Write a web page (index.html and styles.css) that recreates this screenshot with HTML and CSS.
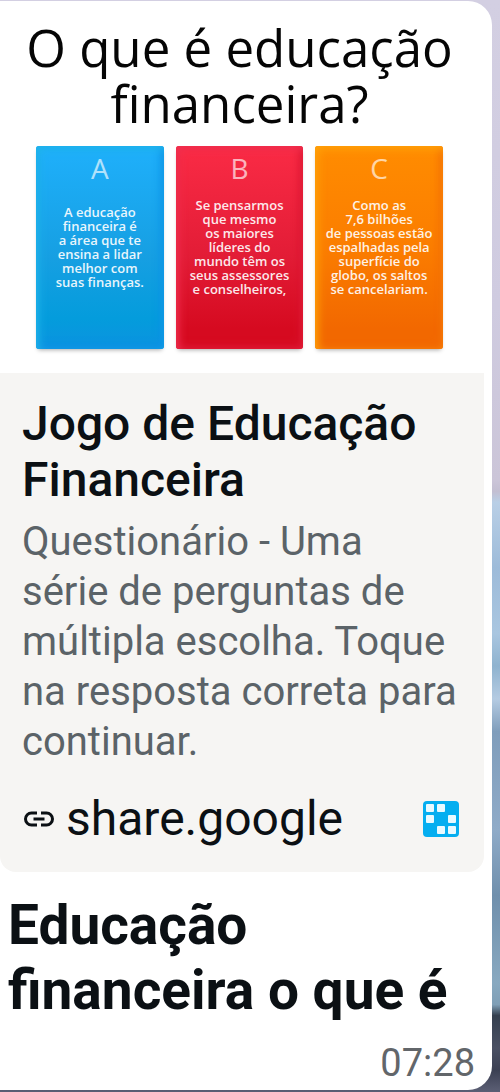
FILE: index.html
```html
<!DOCTYPE html>
<html lang="pt-BR">
<head>
<meta charset="utf-8">
<meta name="viewport" content="width=device-width, initial-scale=1">
<title>Educação financeira</title>
<link rel="stylesheet" href="styles.css">
</head>
<body>
<main class="chat">
  <article class="bubble">
    <a class="link-card" href="#">
      <div class="preview">
        <h2 class="question">O que é educação<br>financeira?</h2>
        <div class="answers">
          <section class="answer answer-a">
            <h3 class="letter">A</h3>
            <p class="answer-text">A educação<br>financeira é<br>a área que te<br>ensina a lidar<br>melhor com<br>suas finanças.</p>
          </section>
          <section class="answer answer-b">
            <h3 class="letter">B</h3>
            <p class="answer-text">Se pensarmos<br>que mesmo<br>os maiores<br>líderes do<br>mundo têm os<br>seus assessores<br>e conselheiros,</p>
          </section>
          <section class="answer answer-c">
            <h3 class="letter">C</h3>
            <p class="answer-text">Como as<br>7,6 bilhões<br>de pessoas estão<br>espalhadas pela<br>superfície do<br>globo, os saltos<br>se cancelariam.</p>
          </section>
        </div>
      </div>
      <div class="details">
        <h1 class="link-title">Jogo de Educação Financeira</h1>
        <p class="description">Questionário - Uma<br>série de perguntas de<br>múltipla escolha. Toque<br>na resposta correta para<br>continuar.</p>
        <div class="source">
          <svg class="link-icon" viewBox="0 0 30 16" aria-hidden="true">
            <path d="M13 2H7.500a6 6 0 0 0 0 12H13M17 2h5.500a6 6 0 0 1 0 12H17M9.500 8h11"/>
          </svg>
          <span class="domain">share.google</span>
          <svg class="site-icon" viewBox="0 0 36 36" aria-hidden="true">
            <rect class="site-base" width="36" height="36" rx="4"/>
            <g class="site-tiles">
              <rect x="3" y="3" width="8" height="8" rx="1"/>
              <rect x="14" y="3" width="8" height="8" rx="1"/>
              <rect x="3" y="14" width="8" height="8" rx="1"/>
              <rect x="25" y="14" width="8" height="8" rx="1"/>
              <rect x="14" y="25" width="8" height="8" rx="1"/>
              <rect x="25" y="25" width="8" height="8" rx="1"/>
            </g>
          </svg>
        </div>
      </div>
    </a>
    <p class="message">Educação financeira o que é</p>
    <time class="time" datetime="07:28">07:28</time>
  </article>
</main>
</body>
</html>
```
FILE: styles.css
```css
* {
  box-sizing: border-box;
  margin: 0;
}

body {
  font-family: Roboto, "Liberation Sans", sans-serif;
  color: #0b1014;
}

.chat {
  min-height: 100vh;
  padding: 1px 8px 2px 0;
  background: linear-gradient(#d3cfe2 0%, #cfcbe0 28%, #cbc5d8 44%, #c3bfd2 45%, #b9cfe6 46%, #9dbbd9 52%, #a9c6e0 58%, #8fb3cf 61%, #b4cbe2 64%, #7f9dbb 67%, #8fabc8 76%, #6f8fac 82%, #88a9c0 90%, #7f9fb6 92%, #35404f 93%, #4a5063 96%, #3b4053 98%, #5c5f75 100%);
}

.bubble {
  display: flex;
  flex-direction: column;
  background: #fff;
  border-radius: 0 24px 24px 0;
}

.link-card {
  display: block;
  margin-right: 8px;
  color: inherit;
  text-decoration: none;
}

.preview {
  padding: 18px 41px 24px 36px;
  font-family: "Open Sans", "Noto Sans", sans-serif;
}

.question {
  margin: 0 -36px 15px;
  color: #050505;
  font-size: 51px;
  font-weight: 400;
  line-height: 56px;
  text-align: center;
}

.answers {
  display: grid;
  grid-template-columns: repeat(3, 1fr);
  gap: 12px;
}

.answer {
  display: flex;
  flex-direction: column;
  min-height: 203px;
  padding: 4px 0 42px;
  border-radius: 3px;
  color: #fff;
  text-align: center;
}

.answer-a {
  background: linear-gradient(#1fb0fb, #169fe2 55%, #049cdc 85%, #0b93e0);
  box-shadow: inset 3px 3px 8px #20b4ea, inset -3px -3px 8px #0c8fe4, 0 3px 4px -2px #aaa;
}

.answer-b {
  background: linear-gradient(#fa2b45, #e21c36 55%, #d60a20 90%);
  box-shadow: inset 3px 3px 8px #f03050, inset -3px -3px 8px #d8142e, 0 3px 4px -2px #aaa;
}

.answer-c {
  background: linear-gradient(#ff8c00, #fb7d00 50%, #f26800 90%);
  box-shadow: inset 3px 3px 8px #ffa408, inset -3px -3px 8px #f26a08, 0 3px 4px -2px #aaa;
}

.letter {
  font-size: 28px;
  font-weight: 400;
  line-height: 36px;
  opacity: 0.65;
}

.answer-text {
  margin: auto 0;
  font-size: 13px;
  font-weight: 600;
  line-height: 14px;
  opacity: 0.9;
  white-space: nowrap;
}

.details {
  padding: 23px 22px 25px;
  background: #f6f5f3;
  border-radius: 0 0 16px 16px;
}

.link-title {
  margin-bottom: 9px;
  font-size: 48px;
  font-weight: 500;
  line-height: 56px;
}

.description {
  margin-bottom: 24px;
  color: #5b6368;
  font-size: 40px;
  line-height: 50px;
}

.source {
  display: flex;
  align-items: center;
}

.link-icon {
  width: 30px;
  height: 16px;
  margin: 0 12px 0 2px;
  fill: none;
  stroke: #0b1014;
  stroke-width: 3;
}

.domain {
  flex: 1;
  font-size: 48px;
  line-height: 56px;
}

.site-icon {
  width: 36px;
  height: 36px;
  margin-right: 3px;
}

.site-base {
  fill: #05aef0;
}

.site-tiles {
  fill: #eafaff;
}

.message {
  padding: 21px 8px 0;
  font-size: 55px;
  font-weight: 700;
  line-height: 65px;
}

.time {
  align-self: flex-end;
  padding: 16px 17px 3px;
  color: #62666a;
  font-size: 38px;
  line-height: 48px;
}
```
